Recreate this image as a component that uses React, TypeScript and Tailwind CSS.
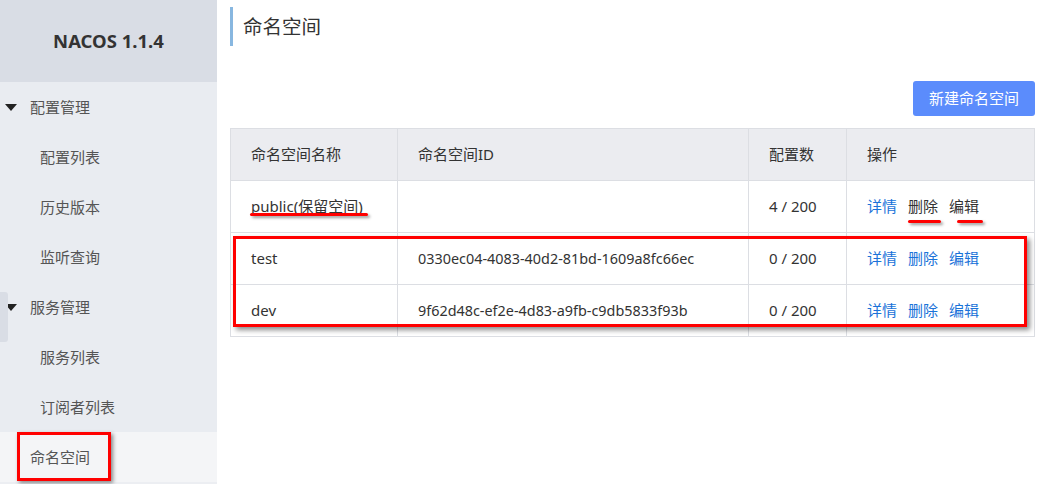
const font = { fontFamily: '"Noto Sans", "Noto Sans CJK SC", sans-serif' };

type Row = { name: string; id: string; count: string; disabled?: boolean };

const rows: Row[] = [
  { name: 'public(保留空间)', id: '', count: '4 / 200', disabled: true },
  { name: 'test', id: '0330ec04-4083-40d2-81bd-1609a8fc66ec', count: '0 / 200' },
  { name: 'dev', id: '9f62d48c-ef2e-4d83-a9fb-c9db5833f93b', count: '0 / 200' },
];

function Caret() {
  return <span className="inline-block w-0 h-0 border-l-[6px] border-r-[6px] border-t-[7px] border-l-transparent border-r-transparent border-t-[#222] mr-[13px]" />;
}

function Sidebar() {
  const item = 'h-[50px] flex items-center text-[15px] text-[#555]';
  return (
    <div className="w-[217px] shrink-0 flex flex-col bg-[#e9ecf1] relative">
      <div className="h-[82px] bg-[#d9dde5] flex items-center justify-center text-[18.5px] font-bold text-[#333]">
        NACOS 1.1.4
      </div>
      <div className={`${item} pl-[5px] text-[#333]`}><Caret />配置管理</div>
      <div className={`${item} pl-[40px]`}>配置列表</div>
      <div className={`${item} pl-[40px]`}>历史版本</div>
      <div className={`${item} pl-[40px]`}>监听查询</div>
      <div className={`${item} pl-[5px] text-[#333]`}><Caret />服务管理</div>
      <div className={`${item} pl-[40px]`}>服务列表</div>
      <div className={`${item} pl-[40px]`}>订阅者列表</div>
      <div className={`${item} pl-[30px] bg-[#f4f5f7] text-[#333]`}>命名空间</div>
      <div className="flex-1 bg-[#eceef2]" />
      {/* collapse handle */}
      <div className="absolute left-0 top-[292px] w-[8px] h-[50px] bg-[#d9dde5] rounded-r-[3px]" />
      {/* annotation */}
      <div className="absolute left-[17px] top-[432px] w-[94px] h-[49px] border-[3px] border-[#f00] shadow-[2px_2px_4px_rgba(0,0,0,0.45)]" />
    </div>
  );
}

export default function App() {
  const cell = 'px-[20px] border-r border-[#dcdee3] flex items-center';
  return (
    <div className="w-[1040px] h-[484px] flex bg-white overflow-hidden" style={font}>
      <Sidebar />
      <div className="flex-1 relative pl-[13px] pr-[5px]">
        <div className="mt-[7px] h-[39px] border-l-[3px] border-[#88b7e0] pl-[10px] flex items-center text-[19.5px] text-[#333]">
          命名空间
        </div>
        <div className="flex justify-end mt-[35px]">
          <button className="w-[122px] h-[35px] rounded-[3px] bg-[#5b8cfc] text-white text-[15px]">新建命名空间</button>
        </div>
        <div className="mt-[12px] border-l border-t border-[#dcdee3] text-[15px] text-[#333]">
          <div className="flex h-[52px] bg-[#ebecf0] border-b border-[#dcdee3]">
            <div className={`${cell} w-[167px]`}>命名空间名称</div>
            <div className={`${cell} w-[351px]`}>命名空间ID</div>
            <div className={`${cell} w-[98px]`}>配置数</div>
            <div className={`${cell} flex-1`}>操作</div>
          </div>
          {rows.map((r) => (
            <div key={r.name} className="flex h-[52px] border-b border-[#dcdee3]">
              <div className={`${cell} w-[167px]`}>{r.name}</div>
              <div className={`${cell} w-[351px] text-[14.4px]`}>{r.id}</div>
              <div className={`${cell} w-[98px]`}>{r.count}</div>
              <div className={`${cell} flex-1 gap-[11px]`}>
                <span className="text-[#1a73d9]">详情</span>
                <span className={r.disabled ? 'text-[#333]' : 'text-[#1a73d9]'}>删除</span>
                <span className={r.disabled ? 'text-[#333]' : 'text-[#1a73d9]'}>编辑</span>
              </div>
            </div>
          ))}
        </div>
        {/* annotations */}
        <div className="absolute left-[33px] top-[213px] w-[118px] h-[3px] bg-[#f00] shadow-[2px_2px_3px_rgba(0,0,0,0.4)] rounded-full" />
        <div className="absolute left-[691px] top-[220px] w-[33px] h-[3px] bg-[#f00] shadow-[2px_2px_3px_rgba(0,0,0,0.4)] rounded-full" />
        <div className="absolute left-[740px] top-[220px] w-[26px] h-[3px] bg-[#f00] shadow-[2px_2px_3px_rgba(0,0,0,0.4)] rounded-full" />
        <div className="absolute left-[16px] top-[236px] w-[794px] h-[91px] border-[3px] border-[#f00] shadow-[3px_3px_5px_rgba(0,0,0,0.45)]" />
      </div>
    </div>
  );
}
